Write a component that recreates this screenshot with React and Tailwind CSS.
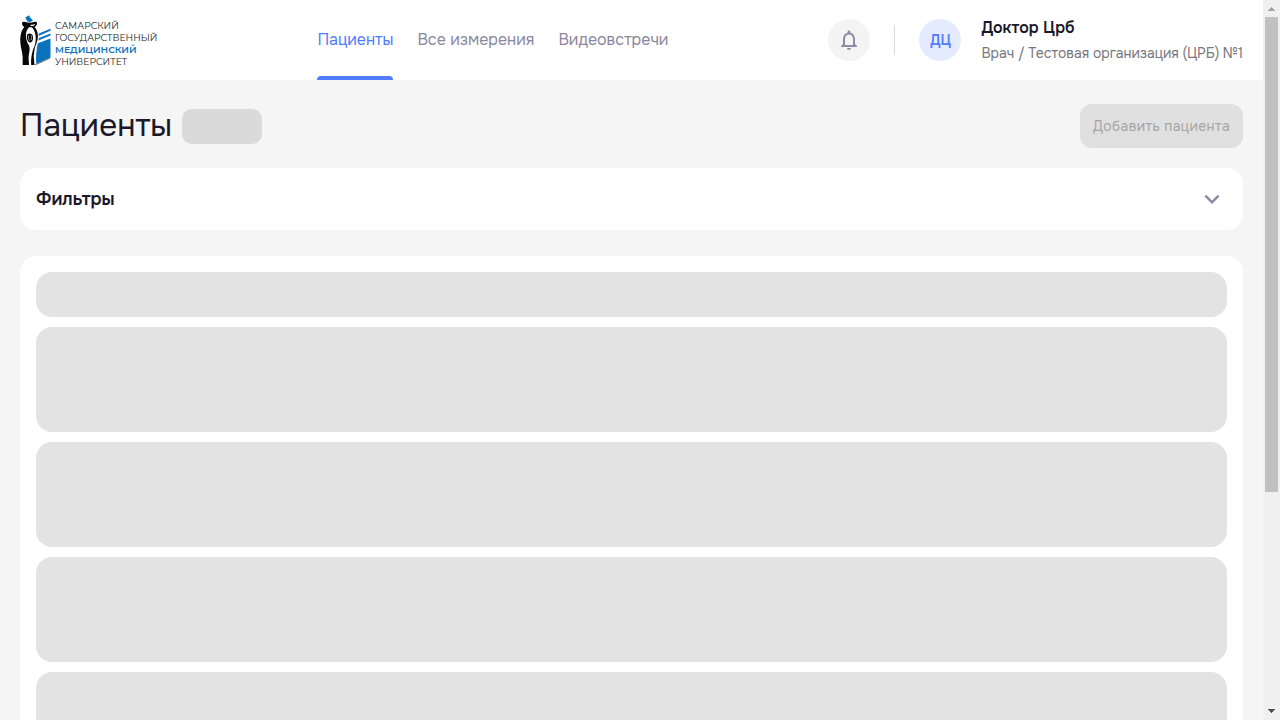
import { MdNotificationsNone, MdExpandMore } from "react-icons/md";

function Logo() {
  return (
    <div className="flex h-[50px] w-[138px] gap-[4px]">
      <svg viewBox="0 0 31 51" className="h-[51px] w-[31px] shrink-0">
        <path d="M5.300 2.600 9 .2l1 2.100 3 3.200-3.200 1.700-2.600-.9Z" fill="#0b72bd" />
        <path d="M2.300 7.200c2.600-1.200 4.200.6 7.300.6s4.900-1.800 7.200-.6c.9 1.800-.4 3.600-2.600 5H4.700C2.400 10.800 1.500 9 2.300 7.200Z" fill="#080808" />
        <path d="M10.500 9.800c2 .2 3.300-.3 4.700-1.100-.3 1.300-1.200 2-2.400 2.400h-2Z" fill="#fff" />
        <path d="M4.300 12h4.900C6.800 14.500 5.600 18 6 22c.3 3.600 1.500 6.200 3 8.500 1.500 4-.2 7.500-.4 11.500-.1 2.800.3 5.500.5 8H2.700c-.2-3.600.3-8-.6-12.500C1 32.500-.2 27.500.4 22c.4-4.400 1.700-7.500 3.900-10Z" fill="#080808" />
        <path d="M11.800 12h2.600c2.300 2.200 3.600 5.600 3.500 9.500-.1 4.700-2 7.700-2.900 11-.9 3.500-.7 5.500-1.300 8.500l.8 9h-3.300c-.5-4.500.2-9 1.300-13.500.8-3 2.500-5.500 3-9.500.9-6-.4-11.200-3.700-15Z" fill="#080808" />
        <path d="M7.200 19.500c1.700-1.800 4.600-1.400 5.500 1 .8 2.400.2 5.800-1.500 6.800-1.800.9-3.600-.6-4.100-3-.3-1.800-.5-3.600.1-4.800Z" fill="#080808" />
        <path d="M8.800 20.500c-.5 1.800-.2 3.800.6 5.300m1.800-5.500c.5 1.500.5 3-.1 4.700" fill="none" stroke="#ddd" strokeWidth=".7" />
        <path d="m18.800 18.400 11.700-4.600v1.900l-12 5.200Zm0 4.700 11.700-4.600v1.900l-12 5ZM17.800 28.200l12.700-4.700v18.900l-14.300 6.700c-.5-7 .1-14 1.600-20.900Z" fill="#0b72bd" />
        <path d="m15 50 15-6.800" stroke="#222" strokeWidth=".6" />
      </svg>
      <div className="flex flex-col whitespace-nowrap pt-[5.4px] font-['Montserrat','Inter',sans-serif] text-[9.260px] leading-[11.700px] text-[#252525]">
        <span>САМАРСКИЙ</span>
        <span>ГОСУДАРСТВЕННЫЙ</span>
        <span className="font-semibold text-[#0b72bd]">МЕДИЦИНСКИЙ</span>
        <span>УНИВЕРСИТЕТ</span>
      </div>
    </div>
  );
}

function Header() {
  return (
    <header className="flex h-20 shrink-0 items-center bg-white px-5">
      <Logo />
      <nav className="ml-[159px] flex h-20 gap-6 whitespace-nowrap text-[16px] leading-[80px] text-[#8b88a0]">
        <div className="flex w-[76px] flex-col text-[#527cff]">
          <span className="h-[76px] pl-[0.4px]">Пациенты</span>
          <span className="h-1 rounded-t-[4px] bg-[#527cff]" />
        </div>
        <span className="w-[117px] pl-[0.4px]">Все измерения</span>
        <span className="w-[111px] pl-[0.4px]">Видеовстречи</span>
      </nav>
      <div className="ml-auto flex items-center">
        <div className="flex size-[42px] items-center justify-center rounded-full bg-[#f4f4f4] text-[#8f8ba6]">
          <MdNotificationsNone size={24} />
        </div>
        <div className="ml-6 h-[30px] w-px bg-[#dadada]" />
        <div className="ml-6 flex size-[42px] items-center justify-center rounded-full bg-[#e5ebff] pl-px pt-px text-[14px] font-semibold text-[#527cff]">ДЦ</div>
        <div className="ml-5 flex w-[262px] flex-col gap-[1px] whitespace-nowrap pl-[0.4px] pt-px">
          <span className="text-[16px] font-semibold leading-6 text-[#1b1829]">Доктор Црб</span>
          <span className="text-[14px] leading-6 text-[#777780]">Врач / Тестовая организация (ЦРБ) №1</span>
        </div>
      </div>
    </header>
  );
}

function Scrollbar() {
  return (
    <div className="flex h-full w-[17px] shrink-0 flex-col items-center bg-[#f0f0f0]">
      <svg viewBox="0 0 17 17" className="size-[17px] shrink-0" shapeRendering="crispEdges">
        <path d="M5 11h7v-1h-1V9h-1V8H9V7H8v1H7v1H6v1H5Z" fill="#a3a3a3" />
      </svg>
      <div className="h-[475px] w-[13px] shrink-0 bg-[#c1c1c1]" />
      <svg viewBox="0 0 17 17" className="mt-auto size-[17px] shrink-0" shapeRendering="crispEdges">
        <path d="M5 6h7v1h-1v1h-1v1H9v1H8V9H7V8H6V7H5Z" fill="#505050" />
      </svg>
    </div>
  );
}

export default function App() {
  return (
    <div className="flex h-[720px] w-[1280px] overflow-hidden bg-[#f5f5f5] font-['Onest','Inter',sans-serif]">
      <div className="flex h-full w-[1263px] flex-col overflow-hidden">
        <Header />
        <main className="flex flex-col px-5 pt-6">
          <div className="flex h-11 items-center justify-between">
            <div className="flex items-center gap-[10px]">
              <h1 className="w-[152px] whitespace-nowrap text-[32px] leading-[44px] text-[#1b1829]">Пациенты</h1>
              <div className="h-[35px] w-20 rounded-[10px] bg-[#dadada]" />
            </div>
            <button disabled className="h-11 w-[163px] whitespace-nowrap rounded-xl bg-[#e0e0e0] text-[14px] tracking-[0.4px] text-[#a6a6a6]">Добавить пациента</button>
          </div>
          <section className="mt-5 flex h-[62px] items-center justify-between rounded-2xl bg-white px-4 text-[#1b1829]">
            <h2 className="text-[18px] font-semibold">Фильтры</h2>
            <MdExpandMore size={30} className="text-[#8f8ba6]" />
          </section>
          <section className="mt-[26px] flex flex-col gap-[10px] rounded-2xl bg-white p-4">
            <div className="h-[45px] shrink-0 rounded-2xl bg-[#e3e3e3]" />
            {[0, 1, 2, 3].map((row) => (
              <div key={row} className="h-[105px] shrink-0 rounded-2xl bg-[#e3e3e3]" />
            ))}
          </section>
        </main>
      </div>
      <Scrollbar />
    </div>
  );
}
